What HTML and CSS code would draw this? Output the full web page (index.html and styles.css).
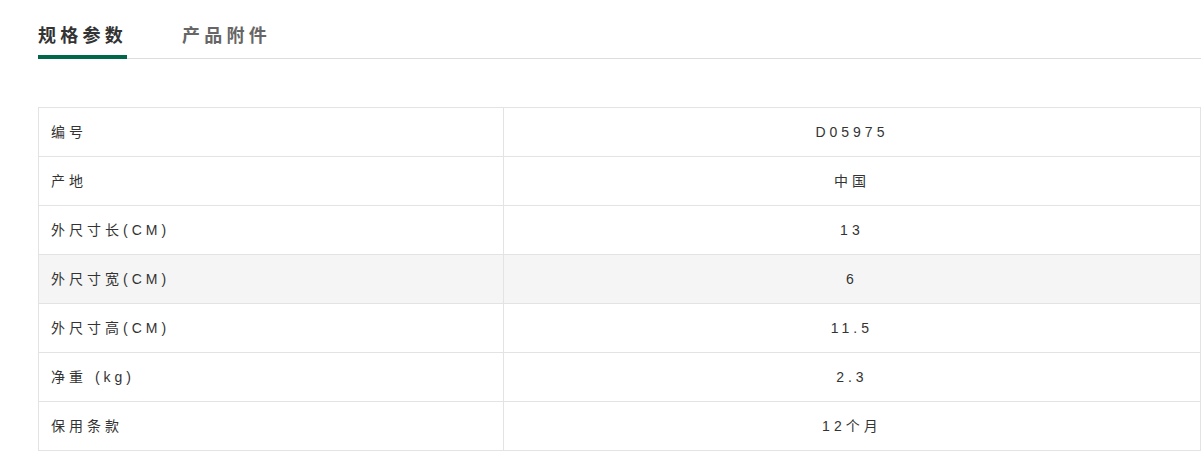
FILE: index.html
```html
<!DOCTYPE html>
<html lang="zh-CN">
<head>
<meta charset="utf-8">
<title>规格参数</title>
<link rel="stylesheet" href="styles.css">
</head>
<body>
<div class="page">
  <div class="tabs">
    <div class="tab active">规格参数</div>
    <div class="tab">产品附件</div>
  </div>
  <table class="spec">
    <colgroup><col class="col-k"><col class="col-v"></colgroup>
    <tbody>
      <tr><td class="k">编号</td><td class="v">D05975</td></tr>
      <tr><td class="k">产地</td><td class="v">中国</td></tr>
      <tr><td class="k">外尺寸长(CM)</td><td class="v">13</td></tr>
      <tr class="hover"><td class="k">外尺寸宽(CM)</td><td class="v">6</td></tr>
      <tr><td class="k">外尺寸高(CM)</td><td class="v">11.5</td></tr>
      <tr><td class="k">净重 (kg)</td><td class="v">2.3</td></tr>
      <tr><td class="k">保用条款</td><td class="v">12个月</td></tr>
    </tbody>
  </table>
</div>
</body>
</html>
```
FILE: styles.css
```css
html, body {
  margin: 0;
  padding: 0;
  background: #ffffff;
}
.page {
  padding-left: 38px;
  font-family: "Liberation Sans", "Noto Sans CJK SC", sans-serif;
  font-stretch: condensed;
  color: #333333;
}
.tabs {
  display: flex;
  gap: 55px;
  border-bottom: 1px solid #dddddd;
  height: 59px;
  box-sizing: border-box;
}
.tab {
  font-family: "Noto Sans CJK SC", sans-serif;
  font-stretch: normal;
  font-size: 18px;
  font-weight: 700;
  letter-spacing: 4.25px;
  color: #666666;
  line-height: 26px;
  padding-top: 21px;
  box-sizing: border-box;
  height: 58px;
}
.tab.active {
  color: #333333;
  border-bottom: 4px solid #00674a;
  margin-bottom: -1px;
  height: 59px;
}
.spec {
  margin-top: 48px;
  width: 100%;
  border-collapse: collapse;
  table-layout: fixed;
  border: 1px solid #dddddd;
}
.col-k {
  width: 40%;
}
.spec td {
  border: 1px solid #e3e3e3;
  height: 48px;
  padding: 0;
  font-size: 14px;
  letter-spacing: 4px;
  line-height: 20px;
  vertical-align: middle;
}
.spec td.k {
  padding-left: 12px;
  text-align: left;
}
.spec td.v {
  text-align: center;
}
.spec tr.hover td {
  background: #f5f5f5;
}
```
